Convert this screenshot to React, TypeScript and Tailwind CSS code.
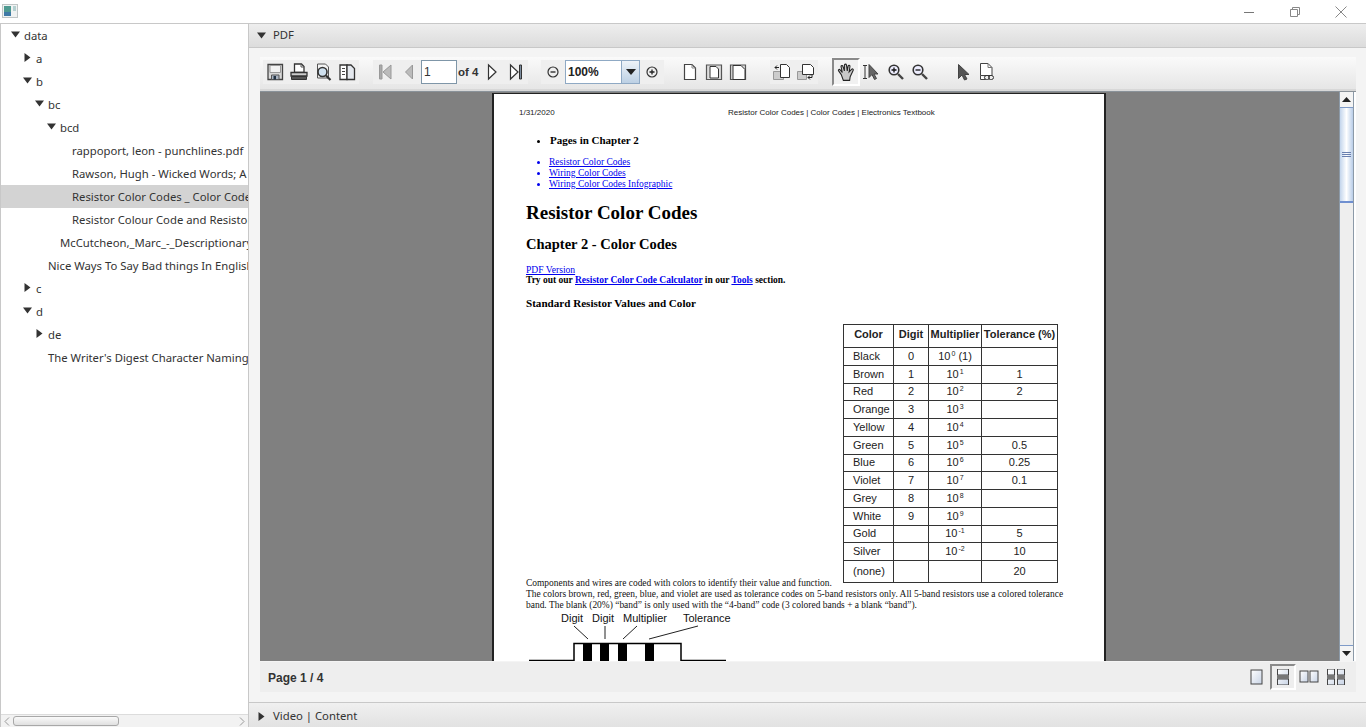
const uiFont = "font-['Noto_Sans',sans-serif]"

const treeRows = [
  { label: 'data', indent: 'pl-[23px]', arrowAt: 'left-[10px]', open: true },
  { label: 'a', indent: 'pl-[35px]', arrowAt: 'left-[22px]', open: false },
  { label: 'b', indent: 'pl-[35px]', arrowAt: 'left-[22px]', open: true },
  { label: 'bc', indent: 'pl-[47px]', arrowAt: 'left-[34px]', open: true },
  { label: 'bcd', indent: 'pl-[59px]', arrowAt: 'left-[46px]', open: true },
  { label: 'rappoport, leon - punchlines.pdf', indent: 'pl-[71px]' },
  { label: 'Rawson, Hugh - Wicked Words; A Vicious Vocabulary.pdf', indent: 'pl-[71px]' },
  { label: 'Resistor Color Codes _ Color Codes _ Electronics Textbook.pdf', indent: 'pl-[71px]', selected: true },
  { label: 'Resistor Colour Code and Resistor Values.pdf', indent: 'pl-[71px]' },
  { label: 'McCutcheon,_Marc_-_Descriptionary.pdf', indent: 'pl-[59px]' },
  { label: 'Nice Ways To Say Bad things In English.pdf', indent: 'pl-[47px]' },
  { label: 'c', indent: 'pl-[35px]', arrowAt: 'left-[22px]', open: false },
  { label: 'd', indent: 'pl-[35px]', arrowAt: 'left-[22px]', open: true },
  { label: 'de', indent: 'pl-[47px]', arrowAt: 'left-[34px]', open: false },
  { label: "The Writer's Digest Character Naming Sourcebook.pdf", indent: 'pl-[47px]' },
]

const colorRows = [
  ['Black', '0', '0', ''],
  ['Brown', '1', '1', '1'],
  ['Red', '2', '2', '2'],
  ['Orange', '3', '3', ''],
  ['Yellow', '4', '4', ''],
  ['Green', '5', '5', '0.5'],
  ['Blue', '6', '6', '0.25'],
  ['Violet', '7', '7', '0.1'],
  ['Grey', '8', '8', ''],
  ['White', '9', '9', ''],
  ['Gold', '', '-1', '5'],
  ['Silver', '', '-2', '10'],
  ['(none)', '', '', '20'],
]

function Arrow({ open }: { readonly open?: boolean }) {
  return (
    <svg width="9" height="9" viewBox="0 0 9 9" className="fill-[#333]">
      {open ? <path d="M0 1.5h9L4.5 7.5z" /> : <path d="M1.5 0v9L7.5 4.5z" />}
    </svg>
  )
}

function TreeRow({ row }: { readonly row: (typeof treeRows)[number] }) {
  return (
    <div
      className={`relative h-[23px] overflow-hidden whitespace-nowrap text-[11.300px] leading-[23px] text-[#333] ${row.indent} ${row.selected ? 'bg-[#d3d3d3]' : ''}`}
    >
      {row.arrowAt && (
        <span className={`absolute top-[6px] ${row.arrowAt}`}>
          <Arrow open={row.open} />
        </span>
      )}
      {row.label}
    </div>
  )
}

function Icon({ children }: { readonly children: React.ReactNode }) {
  return (
    <div className="flex h-[24px] w-[24px] items-center justify-center">
      <svg width="20" height="20" viewBox="0 0 20 20" fill="none" strokeWidth="1">
        {children}
      </svg>
    </div>
  )
}

function Toolbar() {
  return (
    <div className="flex h-[34px] items-start border-b-2 border-[#d8d8d8] bg-gradient-to-b from-[#fafafa] to-[#e6e6e6] pl-[3px] pt-[3px] text-[#333]">
      <div className="flex bg-[#efefef]">
        <Icon>
          <path d="M3 2.500h14.500v15H3z" fill="#d8d8d8" stroke="#444" strokeWidth="1.300" />
          <path d="M5 3.500h10.500v7H5z" fill="#f2f2f2" stroke="#999" />
          <path d="M6.500 13h7.500v4.500H6.500z" fill="#aab4c2" stroke="#555" />
          <path d="M8.500 14h2.500v3.500H8.500z" fill="#234" />
        </Icon>
        <Icon>
          <path d="M5.500 2h7l2.500 2.500v6h-9.500z" fill="#fff" stroke="#333" strokeWidth="1.300" />
          <path d="M12 2.500v2.500h3" stroke="#555" />
          <path d="M2 10.500h16v3.500H2z" fill="#ccc" stroke="#333" strokeWidth="1.300" />
          <path d="M2.500 14.500h15v3h-15z" fill="#555" stroke="#333" />
        </Icon>
        <Icon>
          <path d="M4.500 2h8l3 3v11h-11z" fill="#f4f4f4" stroke="#555" />
          <circle cx="9.500" cy="10" r="4.500" fill="#cfe0ee" stroke="#333" strokeWidth="1.600" />
          <path d="M13 13.500l4.500 4.500" stroke="#333" strokeWidth="2.200" />
        </Icon>
        <Icon>
          <path d="M3 3h7v14.500H3z" fill="#fff" stroke="#333" strokeWidth="1.300" />
          <path d="M10 3h4l3.500 3.500v11H10z" fill="#e4e8ee" stroke="#333" strokeWidth="1.300" />
          <path d="M5 6.500h3M5 9.500h3M5 12.500h3" stroke="#444" />
        </Icon>
      </div>
      <div className="ml-[14px] flex items-start bg-[#efefef]">
        <Icon>
          <path d="M4.500 3h2.500v14H4.500z" fill="#aaa" stroke="#999" />
          <path d="M16 3v14L8 10z" fill="#bbb" stroke="#999" />
        </Icon>
        <Icon>
          <path d="M13.500 3v14L6.500 10z" fill="#bbb" stroke="#999" />
        </Icon>
        <div className="flex h-[24px] w-[36px] items-center border border-[#7f96a8] bg-white pl-[2px] font-['Liberation_Sans',sans-serif] text-[12px]">
          1
        </div>
        <div className="ml-[1px] w-[22px] whitespace-nowrap font-['Liberation_Sans',sans-serif] text-[11.500px] font-bold leading-[24px]">
          of 4
        </div>
        <Icon>
          <path d="M6.500 3v14L14 10z" fill="#fff" stroke="#333" strokeWidth="1.200" />
        </Icon>
        <Icon>
          <path d="M4.500 3v14L12 10z" fill="#fff" stroke="#333" strokeWidth="1.200" />
          <path d="M13.500 3h2v14h-2z" fill="#7d8ea0" stroke="#333" />
        </Icon>
      </div>
      <div className="ml-[13px] flex items-start bg-[#efefef]">
        <Icon>
          <circle cx="10" cy="10" r="5" fill="#eee" stroke="#333" strokeWidth="1.200" />
          <path d="M7.500 10h5" stroke="#222" strokeWidth="1.300" />
        </Icon>
        <div className="flex h-[24px] w-[75px] border border-[#8fa9c4] bg-white font-['Liberation_Sans',sans-serif] text-[12px] font-bold leading-[22px] text-[#222]">
          <span className="w-[55px] pl-[2px]">100%</span>
          <span className="flex w-[18px] items-center justify-center border-l border-[#8fa9c4] bg-gradient-to-b from-[#eef3f8] to-[#bcd0e4]">
            <svg width="10" height="6" viewBox="0 0 10 6" className="fill-[#222]">
              <path d="M0 0h10L5 6z" />
            </svg>
          </span>
        </div>
        <Icon>
          <circle cx="10" cy="10" r="5" fill="#eee" stroke="#333" strokeWidth="1.200" />
          <path d="M7.500 10h5M10 7.500v5" stroke="#222" strokeWidth="1.300" />
        </Icon>
      </div>
      <div className="ml-[14px] flex items-start">
        <Icon>
          <path d="M4.500 2.500h7.500l3.500 3.500v11.500h-11z" fill="#fff" stroke="#444" strokeWidth="1.200" />
          <path d="M12 2.500v3.500h3.500" stroke="#888" />
        </Icon>
        <Icon>
          <path d="M2.500 3h15v14.500h-15z" fill="#ddd" stroke="#555" strokeWidth="1.200" />
          <path d="M6 4.500h6l2.500 2.500v9H6z" fill="#fff" stroke="#333" />
        </Icon>
        <Icon>
          <path d="M2.500 3h15v14.500h-15z" fill="#ddd" stroke="#555" strokeWidth="1.200" />
          <path d="M5 3.500h8l4 4v10H5z" fill="#fff" stroke="#333" />
        </Icon>
      </div>
      <div className="ml-[20px] flex items-start bg-[#efefef]">
        <Icon>
          <path d="M1.500 9.500h10v8h-10z" fill="#ccc" stroke="#999" />
          <path d="M8.500 2.500h6l3 3v10h-9z" fill="#fff" stroke="#333" />
          <path d="M7 5.500H3M5 3.500l-2 2 2 2" stroke="#222" />
        </Icon>
        <Icon>
          <path d="M1.500 9.500h9v8h-9z" fill="#ccc" stroke="#999" />
          <path d="M6.500 2.500h8l3 3v7h-11z" fill="#fff" stroke="#333" />
          <path d="M16 12.500v3h-4M14 13.500l-2 2 2 2" stroke="#222" />
        </Icon>
      </div>
      <div className="ml-[14px] flex items-start">
        <div className="flex h-[28px] w-[28px] -translate-y-[2px] items-center justify-center border-2 border-[#8a8a8a] border-b-white border-r-white bg-[#f1f1f1]">
          <svg width="21" height="21" viewBox="0 0 20 20">
            <path
              d="M5 12L2.500 8.500c-.8-1 .5-2 1.500-1L6 10 4.800 4.500c-.2-1.300 1.500-1.500 1.800-.3L8 8.500 8 3c0-1.300 1.800-1.300 2 0l.7 5.500L11.500 4c.2-1.300 2-1 1.800.3L12.500 9.500l2.300-2.500c1-1 2.200 0 1.500 1.200L13.500 14l-.5 3.500H7z"
              fill="#c8c8c8"
              stroke="#222"
            />
          </svg>
        </div>
        <Icon>
          <path d="M1 3.500h4M1 16.500h4M3 3.500v13" stroke="#333" />
          <path d="M7 2.500v13l3-3 2.500 5 2-1-2.500-4.500h4z" fill="#666" stroke="#444" />
        </Icon>
        <Icon>
          <circle cx="8" cy="8" r="4.800" fill="#eef" stroke="#333" strokeWidth="1.600" />
          <path d="M5.500 8h5M8 5.500v5" stroke="#111" strokeWidth="1.300" />
          <path d="M12 12l5 5" stroke="#444" strokeWidth="2.400" />
        </Icon>
        <Icon>
          <circle cx="8" cy="8" r="4.800" fill="#eef" stroke="#333" strokeWidth="1.600" />
          <path d="M5.500 8h5" stroke="#111" strokeWidth="1.300" />
          <path d="M12 12l5 5" stroke="#444" strokeWidth="2.400" />
        </Icon>
      </div>
      <div className="ml-[19px] flex items-start">
        <Icon>
          <path d="M5.500 2.500v14l3.500-3.500 2.500 5 2.500-1-2.500-4.500h4.500z" fill="#555" stroke="#444" />
        </Icon>
        <Icon>
          <path d="M3.500 1.500h7.500l4 4v8H3.500zM3.500 13.500v4h5" fill="#fff" stroke="#444" />
          <path d="M11 1.500v4h4" stroke="#777" />
          <rect x="7.500" y="13.500" width="5" height="4" rx="2" stroke="#333" fill="none" />
          <rect x="11.500" y="13.500" width="5" height="4" rx="2" stroke="#333" fill="none" />
        </Icon>
      </div>
    </div>
  )
}

function ColorTable() {
  const cell = 'border border-[#333] text-center'
  return (
    <table className="ml-[317px] w-[214px] table-fixed border-collapse font-['Liberation_Sans',sans-serif] text-[11px] leading-none text-[#222]">
      <colgroup>
        <col className="w-[50px]" />
        <col className="w-[35px]" />
        <col className="w-[53px]" />
        <col className="w-[76px]" />
      </colgroup>
      <thead>
        <tr className="h-[23px] font-bold">
          <td className={`${cell} pb-[4px]`}>Color</td>
          <td className={`${cell} pb-[4px]`}>Digit</td>
          <td className={`${cell} whitespace-nowrap pb-[4px]`}>Multiplier</td>
          <td className={`${cell} whitespace-nowrap pb-[4px]`}>Tolerance (%)</td>
        </tr>
      </thead>
      <tbody>
        {colorRows.map(([color, digit, exp, tol], i) => (
          <tr key={color} className={i === 12 ? 'h-[22px]' : 'h-[17.750px]'}>
            <td className="border border-[#333] pl-[9px] text-left">{color}</td>
            <td className={cell}>{digit}</td>
            <td className={cell}>
              {exp && (
                <>
                  10<sup className="top-[-4px] ml-[1px] text-[7px]">{exp}</sup>
                  {i === 0 && '  (1)'}
                </>
              )}
            </td>
            <td className={cell}>{tol}</td>
          </tr>
        ))}
      </tbody>
    </table>
  )
}

function PdfPage() {
  return (
    <div className="ml-[232px] mt-[1px] h-[570px] w-[614px] shrink-0 overflow-hidden border-x-2 border-t border-[#222] bg-white pl-[32px] font-['Liberation_Serif',serif] text-black">
      <div className="mt-[13px] flex h-[12px] font-['Liberation_Sans',sans-serif] text-[8px] leading-[12px] text-[#222]">
        <span className="ml-[-7px] w-[209px]">1/31/2020</span>
        <span>Resistor Color Codes | Color Codes | Electronics Textbook</span>
      </div>
      <ul className="ml-[15px] mt-[14px] h-[14px] list-disc pl-[9px] text-[11px] font-bold leading-[14px]">
        <li>Pages in Chapter 2</li>
      </ul>
      <ul className="ml-[15px] mt-[10px] list-disc pl-[8px] text-[9.500px] leading-[11px] text-[#0000ee]">
        <li className="underline">Resistor Color Codes</li>
        <li className="underline">Wiring Color Codes</li>
        <li className="underline">Wiring Color Codes Infographic</li>
      </ul>
      <h1 className="mt-[11px] h-[24px] text-[19px] font-bold leading-[24px]">Resistor Color Codes</h1>
      <h2 className="mt-[10px] h-[18px] text-[14.500px] font-bold leading-[18px]">Chapter 2 - Color Codes</h2>
      <p className="mt-[11px] h-[11px] text-[9.600px] leading-[11px] text-[#0000ee] underline">PDF Version</p>
      <p className="h-[11px] text-[9.500px] font-bold leading-[11px]">
        Try out our <span className="text-[#0000ee] underline">Resistor Color Code Calculator</span> in our{' '}
        <span className="text-[#0000ee] underline">Tools</span> section.
      </p>
      <h3 className="mt-[10px] h-[14px] text-[11.100px] font-bold leading-[14px]">Standard Resistor Values and Color</h3>
      <div className="mt-[14px]">
        <ColorTable />
      </div>
      <div className="mt-[-5px] text-[9.450px] leading-[11px] text-[#111]">
        <p className="whitespace-nowrap">Components and wires are coded with colors to identify their value and function.</p>
        <p className="whitespace-nowrap">
          The colors brown, red, green, blue, and violet are used as tolerance codes on 5-band resistors only. All 5-band resistors use a colored tolerance
        </p>
        <p className="whitespace-nowrap">band. The blank (20%) “band” is only used with the “4-band” code (3 colored bands + a blank “band”).</p>
      </div>
      <svg width="220" height="52" viewBox="526 610 220 52" className="block">
        <g fontFamily="Liberation Sans, sans-serif" fontSize="11" fill="#111">
          <text x="561" y="621">Digit</text>
          <text x="592" y="621">Digit</text>
          <text x="623" y="621">Multiplier</text>
          <text x="683" y="621">Tolerance</text>
        </g>
        <path d="M574 625l14 13M605 625v13M637 625l-14 13M698 625l-49 13" stroke="#222" fill="none" />
        <path d="M529 659.500h45V642.500h107V659.500h45" stroke="#000" strokeWidth="1.500" fill="none" />
        <path d="M583 642h9v19h-9zM600 642h9v19h-9zM618 642h9v19h-9zM645 642h9v19h-9z" fill="#000" />
      </svg>
    </div>
  )
}

function VerticalScrollbar() {
  return (
    <div className="flex w-[15px] shrink-0 flex-col border-x border-[#8c9aa8] bg-[#eeeeee]">
      <div className="flex h-[16px] items-center justify-center border-b border-[#7f9bc8] bg-[#f4f4f4]">
        <svg width="9" height="5" viewBox="0 0 9 5" className="fill-[#222]">
          <path d="M0 5h9L4.500 0z" />
        </svg>
      </div>
      <div className="flex h-[95px] items-center justify-center border-b-2 border-[#6f8fd0] bg-gradient-to-r from-[#c3d5ec] via-white to-[#b9cde8]">
        <div className="h-[5px] w-[9px] border-y border-[#6a80b0] bg-[linear-gradient(#6a80b0_0_0)] bg-[length:100%_1px] bg-center bg-no-repeat" />
      </div>
      <div className="flex-1" />
      <div className="flex h-[16px] items-center justify-center border-t border-[#7f9bc8] bg-[#f4f4f4]">
        <svg width="9" height="5" viewBox="0 0 9 5" className="fill-[#222]">
          <path d="M0 0h9L4.500 5z" />
        </svg>
      </div>
    </div>
  )
}

function PageLayoutIcons() {
  return (
    <div className="flex items-center pr-[10px]">
      <svg width="13" height="16" viewBox="0 0 13 16" className="mr-[7px]">
        <rect x="1" y="1" width="11" height="14" fill="url(#pageFill)" stroke="#444" />
      </svg>
      <div className="flex h-[26px] w-[26px] items-center justify-center border-2 border-[#8a8a8a] border-b-white border-r-white bg-[#eee]">
        <svg width="14" height="16" viewBox="0 0 14 16">
          <path d="M1.500 0v6h11V0zM1.500 16v-6h11v6z" fill="url(#pageFill)" stroke="#444" />
          <path d="M1 6h12v4H1z" fill="#777" />
        </svg>
      </div>
      <svg width="20" height="16" viewBox="0 0 20 16" className="ml-[3px] mr-[7px]">
        <rect x="1" y="2" width="8" height="11" fill="url(#pageFill)" stroke="#444" />
        <rect x="11" y="2" width="8" height="11" fill="url(#pageFill)" stroke="#444" />
      </svg>
      <svg width="20" height="16" viewBox="0 0 20 16">
        <path d="M1.500 0v6h7V0zM11.500 0v6h7V0zM1.500 16v-6h7v6zM11.500 16v-6h7v6z" fill="url(#pageFill)" stroke="#444" />
        <path d="M1 6h8v4H1zM11 6h8v4h-8z" fill="#777" />
      </svg>
    </div>
  )
}

export default function App() {
  return (
    <div className={`flex h-[727px] w-[1366px] flex-col overflow-hidden bg-white ${uiFont}`}>
      <svg width="0" height="0" className="absolute">
        <defs>
          <linearGradient id="pageFill" x1="0" y1="0" x2="1" y2="1">
            <stop offset="0" stopColor="#fff" />
            <stop offset="1" stopColor="#c9d4e6" />
          </linearGradient>
        </defs>
      </svg>

      <header className="flex h-[23px] shrink-0 items-center justify-between">
        <svg width="16" height="14" viewBox="0 0 16 14" className="ml-[2px] mt-[-1px]">
          <rect x="0.500" y="0.500" width="15" height="13" fill="#f0f2f2" stroke="#c0c6c6" />
          <rect x="2" y="2" width="7" height="10" fill="#4e9a90" />
          <rect x="2" y="8" width="7" height="4" fill="#3f7aa6" />
          <rect x="11" y="2" width="3" height="5" fill="#b4d0d0" />
        </svg>
        <div className="flex items-center pr-[18px]">
          <svg width="12" height="12" viewBox="0 0 12 12" stroke="#777" fill="none">
            <path d="M1 6.500h10" />
          </svg>
          <svg width="12" height="12" viewBox="0 0 12 12" stroke="#888" fill="none" className="ml-[34px]">
            <path d="M1.500 3.500h7v7h-7zM3.500 3.500v-2h7v7h-2" />
          </svg>
          <svg width="14" height="14" viewBox="0 0 14 14" stroke="#888" fill="none" className="ml-[33px]">
            <path d="M1.500 1.500l11 11M12.500 1.500l-11 11" />
          </svg>
        </div>
      </header>

      <div className="flex min-h-0 flex-1 border-t border-[#c8c8c8]">
        <aside className="flex w-[249px] shrink-0 flex-col border-x border-[#c8c8c8]">
          <div className="min-h-0 flex-1 overflow-hidden">
            {treeRows.map((row) => (
              <TreeRow key={row.label} row={row} />
            ))}
          </div>
          <div className="flex h-[13px] shrink-0 items-center justify-between border-t border-[#dcdcdc] bg-[#f2f2f2] px-[3px] text-[#999]">
            <svg width="6" height="9" viewBox="0 0 6 9" fill="none" stroke="#999">
              <path d="M5 .5l-4 4 4 4" />
            </svg>
            <div className="ml-[3px] mr-auto h-[10px] w-[106px] rounded-[3px] border border-[#a8a8a8] bg-gradient-to-b from-[#fafafa] to-[#e0e0e0]" />
            <svg width="6" height="9" viewBox="0 0 6 9" fill="none" stroke="#999">
              <path d="M1 .5l4 4-4 4" />
            </svg>
          </div>
        </aside>

        <main className="flex min-w-0 flex-1 flex-col bg-[#f4f4f4] text-[11.300px] text-[#333]">
          <div className="flex h-[24px] shrink-0 items-center gap-[7px] border-b border-[#c8c8c8] bg-gradient-to-b from-[#eeeeee] to-[#dcdcdc] pl-[8px]">
            <Arrow open />
            PDF
          </div>
          <div className="ml-[11px] mr-[10px] mt-[9px] flex w-[1096px] flex-1 flex-col">
            <Toolbar />
            <div className="flex h-[570px] shrink-0 border-t border-[#8a9299] bg-white pr-[2px]">
              <div className="min-w-0 flex-1 overflow-hidden bg-[#808080]">
                <PdfPage />
              </div>
              <VerticalScrollbar />
            </div>
            <div className="mt-[1px] flex h-[30px] shrink-0 items-center justify-between bg-[#eeeeee] pl-[8px] font-['Liberation_Sans',sans-serif] text-[12px] font-bold">
              <span className="pt-[2px]">Page 1 / 4</span>
              <PageLayoutIcons />
            </div>
          </div>
          <div className="mt-[10px] flex h-[25px] shrink-0 items-center gap-[7px] border-t border-[#c8c8c8] bg-gradient-to-b from-[#f0f0f0] to-[#e2e2e2] pl-[8px] pt-[2px]">
            <Arrow />
            Video | Content
          </div>
        </main>
      </div>
    </div>
  )
}
